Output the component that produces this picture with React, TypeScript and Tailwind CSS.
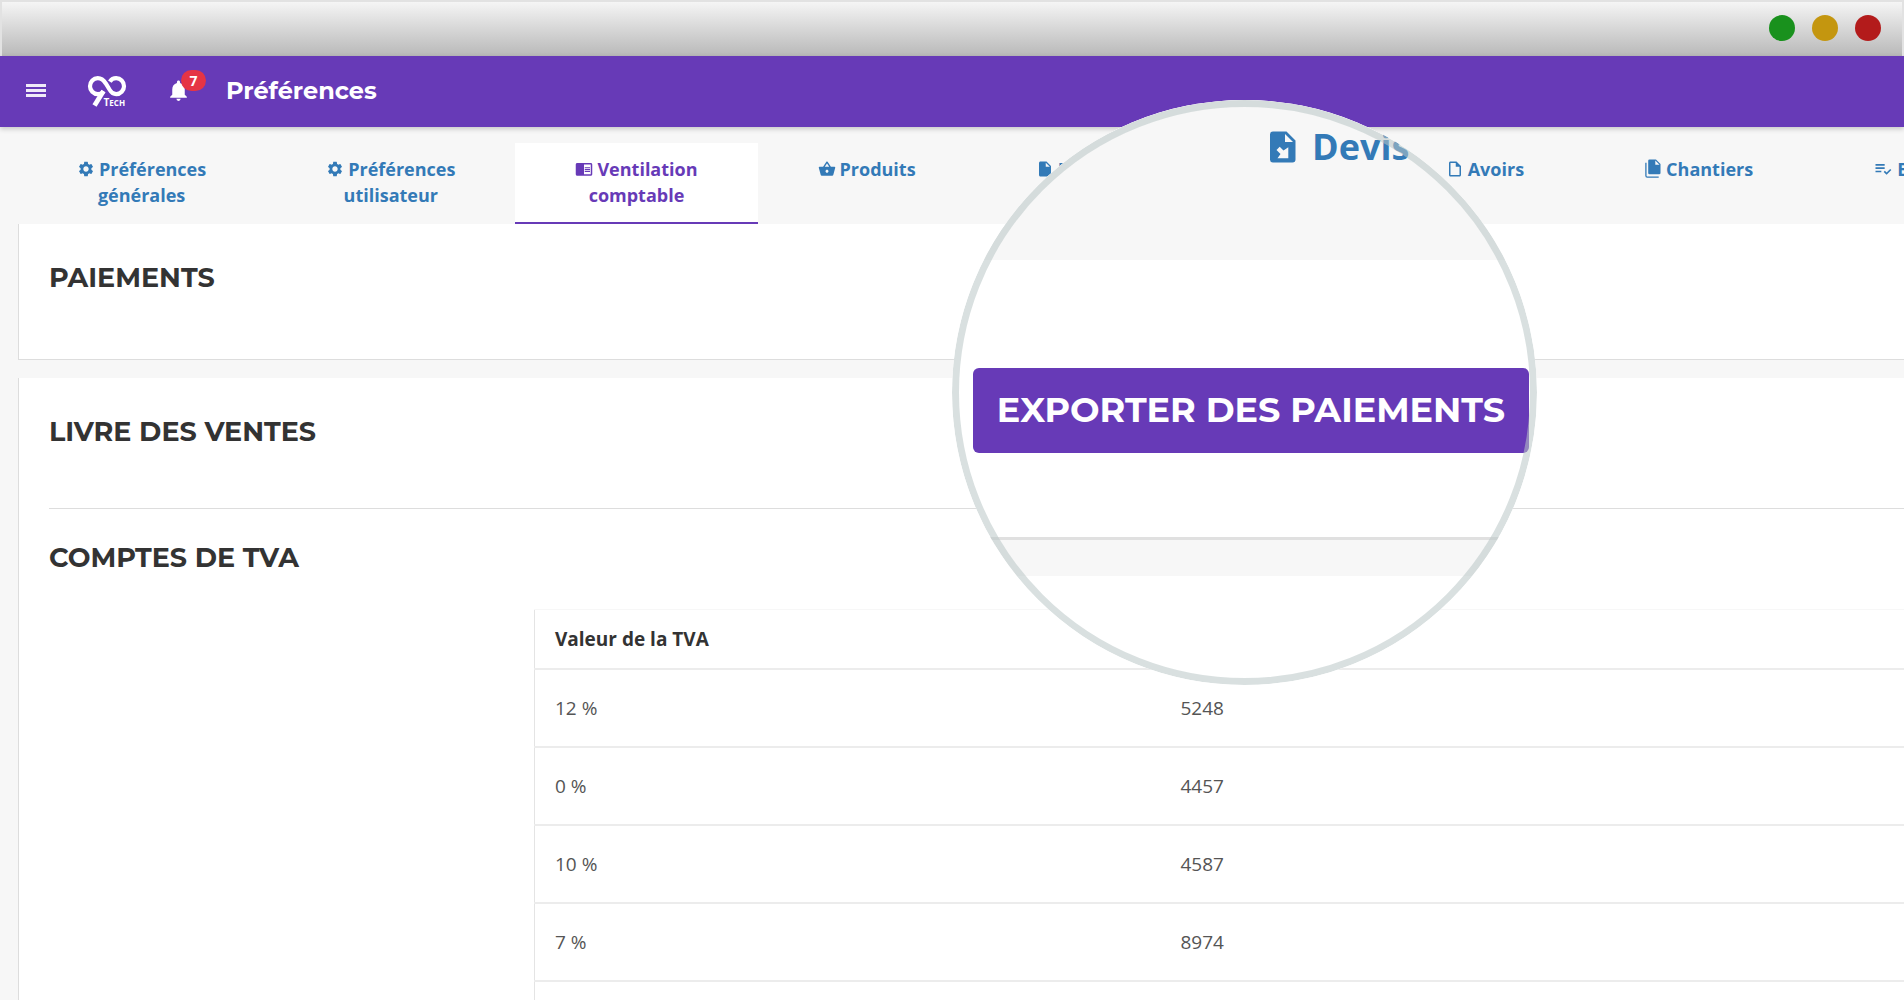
import {
  MdChromeReaderMode,
  MdInsertDriveFile,
  MdNotifications,
  MdOutlineInsertDriveFile,
  MdPlaylistAddCheck,
  MdSettings,
  MdShoppingBasket,
} from "react-icons/md";

/* -------------------------------------------------------
   ICONS
---------------------------------------------------------*/
function IconChantier() {
  return (
    <svg viewBox="0 0 18 20" className="h-5 w-[18px]" fill="currentColor">
      <path d="M5.500 0.500h6.500l4.500 4.500v9a1.300 1.300 0 0 1-1.300 1.300H5.500A1.300 1.300 0 0 1 4.200 14V1.800A1.300 1.300 0 0 1 5.500 0.500zM11.300 1.600v4.200h4.200z" fillRule="evenodd" />
      <path d="M1.900 3.800v13a1.300 1.300 0 0 0 1.300 1.300h11.500" fill="none" stroke="currentColor" strokeWidth="1.300" />
    </svg>
  );
}

function IconDevis({ className }: { className: string }) {
  return (
    <svg viewBox="0 0 26 32" className={className} fill="currentColor">
      <path
        fillRule="evenodd"
        d="M3 0.500h13.500l9 9V28.500a3 3 0 0 1-3 3H3a3 3 0 0 1-3-3V3.500a3 3 0 0 1 3-3zM15 3v8h8zM6.500 19l3.200-3.200 3.800 3.600 4.800-3.200V27.300H7.500l3-4.300z"
      />
    </svg>
  );
}

function Logo() {
  return (
    <svg viewBox="0 0 38 30" className="h-[30px] w-[38px] overflow-visible" fill="none" stroke="#fff">
      <path
        d="M15.500 15.500C14 17.500 12 18.200 9.800 18.200C5.500 18.200 2 14.500 2 10.200C2 5.500 5.500 2.200 9.800 2.200C13.500 2.200 15.500 4 17.800 7.500L21.800 14C23.400 16.700 25.300 18.200 28.200 18.200C32.500 18.200 36 14.500 36 10.200C36 5.500 32.500 2.200 28.200 2.200C25.500 2.200 23.300 3.400 21.800 5.600"
        strokeWidth="4.200"
      />
      <path d="M15.500 15L6.500 29.500" strokeWidth="4.800" />
      <text
        x="15.500"
        y="29.500"
        fill="#fff"
        stroke="none"
        fontSize="10"
        fontWeight="700"
        fontFamily="Open Sans, sans-serif"
      >
        T<tspan fontSize="8">ECH</tspan>
      </text>
    </svg>
  );
}

/* -------------------------------------------------------
   DATA
---------------------------------------------------------*/
const TABS = [
  { icon: <MdSettings size={18} />, lines: ["Préférences", "générales"] },
  { icon: <MdSettings size={18} />, lines: ["Préférences", "utilisateur"] },
  { icon: <MdChromeReaderMode size={18} />, lines: ["Ventilation", "comptable"], active: true },
  { icon: <MdShoppingBasket size={18} />, lines: ["Produits"] },
  { icon: <MdInsertDriveFile size={18} />, lines: ["Factures"] },
  { icon: <IconDevis className="h-4 w-[18px]" />, lines: ["Devis"] },
  { icon: <MdOutlineInsertDriveFile size={18} />, lines: ["Avoirs"] },
  { icon: <IconChantier />, lines: ["Chantiers"] },
  { icon: <MdPlaylistAddCheck size={20} />, lines: ["Bons"] },
];

const COMPTES = [
  { tva: "12 %", compte: "5248" },
  { tva: "0 %", compte: "4457" },
  { tva: "10 %", compte: "4587" },
  { tva: "7 %", compte: "8974" },
];

/* -------------------------------------------------------
   LAYOUT
---------------------------------------------------------*/
function TitleBar() {
  return (
    <div className="flex h-14 shrink-0 items-center justify-end gap-[17px] border-x-2 border-t-2 border-[#e2e2e2] bg-linear-to-b from-[#f5f5f5] to-[#b9b9b9] pr-[21px] pb-0.5">
      <span className="size-[26px] rounded-full bg-[#19911d]" />
      <span className="size-[26px] rounded-full bg-[#c4960f]" />
      <span className="size-[26px] rounded-full bg-[#b31b1b]" />
    </div>
  );
}

function Header() {
  return (
    <header className="relative flex h-[71px] shrink-0 items-center bg-[#673ab7] pb-0.5 pl-[26px] text-white shadow-[0_2px_5px_rgba(0,0,0,0.2)]">
      <button aria-label="Menu" className="flex w-5 flex-col gap-[2px]">
        <span className="h-[3px] bg-white/90" />
        <span className="h-[3px] bg-white/90" />
        <span className="h-[3px] bg-white/90" />
      </button>
      <a href="#" aria-label="90 Tech" className="ml-[42px]">
        <Logo />
      </a>
      <button aria-label="Notifications" className="relative ml-10">
        <MdNotifications size={25} />
        <span className="absolute -top-2 left-[15px] flex h-[21px] w-[25px] items-center justify-center rounded-full bg-[#e53445] text-sm font-bold">
          7
        </span>
      </button>
      <h1 className="ml-[35px] font-[Montserrat,Inter,sans-serif] text-2xl font-bold">Préférences</h1>
    </header>
  );
}

function Tabs() {
  return (
    <nav className="flex h-[97px] shrink-0 overflow-hidden pt-4 pl-[17px]">
      {TABS.map(({ icon, lines, active }) => (
        <a
          key={lines.join(" ")}
          href="#"
          className={`shrink-0 px-[60px] pt-[13px] text-center text-lg leading-[26px] font-bold whitespace-nowrap ${
            active ? "border-b-2 border-[#673ab7] bg-white text-[#673ab7]" : "text-[#337ab7]"
          }`}
        >
          <span className="flex h-[26px] items-center justify-center gap-1">
            {icon}
            {lines[0]}
          </span>
          {lines[1]}
        </a>
      ))}
    </nav>
  );
}

function Titre({ children }: { children: string }) {
  return (
    <h2 className="font-[Montserrat,Inter,sans-serif] text-[27px] leading-8 font-bold text-[#333]">
      {children}
    </h2>
  );
}

function TableTva() {
  return (
    <table className="w-full table-fixed border-t border-l border-t-[#f7f7f7] border-l-[#e4e4e4] text-left text-[19px] text-[#555]">
      <thead>
        <tr className="h-[59px] border-b-2 border-[#ececec] text-[#333]">
          <th className="w-[626px] px-5 font-bold">Valeur de la TVA</th>
          <th />
        </tr>
      </thead>
      <tbody>
        {COMPTES.map((c) => (
          <tr key={c.tva} className="h-[78px] border-b-2 border-[#ececec]">
            <td className="px-5 pt-0.5">{c.tva}</td>
            <td className="px-5 pt-0.5">{c.compte}</td>
          </tr>
        ))}
        <tr className="h-[78px]">
          <td />
          <td />
        </tr>
      </tbody>
    </table>
  );
}

/* magnified view laid over the page */
function Loupe() {
  return (
    <div className="absolute top-[100px] left-[952px] flex size-[585px] flex-col overflow-hidden rounded-full bg-white">
      <div className="flex h-40 shrink-0 bg-[#f7f7f7] pt-[21px] pl-[318px]">
        <span className="flex h-[52px] items-center gap-4 text-4xl font-bold text-[#337ab7]">
          <IconDevis className="h-8 w-[26px]" />
          Devis
        </span>
      </div>
      <div className="flex h-[280px] shrink-0 items-start border-b-[3px] border-[#e0e0e0] pt-[108px] pl-[21px]">
        <button className="h-[85px] w-[556px] shrink-0 rounded-md bg-[#673ab7] font-[Montserrat,Inter,sans-serif] text-[35px] font-bold whitespace-nowrap text-white">
          EXPORTER DES PAIEMENTS
        </button>
      </div>
      <div className="h-9 shrink-0 bg-[#f7f7f7]" />
      <div className="pointer-events-none absolute inset-0 rounded-full border-[7px] border-[rgba(186,199,199,0.55)]" />
    </div>
  );
}

export default function App() {
  return (
    <div className="relative flex h-screen flex-col overflow-hidden bg-[#f7f7f7] font-['Open_Sans',sans-serif]">
      <TitleBar />
      <Header />
      <Tabs />

      <main className="flex flex-1 flex-col gap-[18px] pl-[18px]">
        <section className="h-[136px] shrink-0 border-b border-l border-[#ddd] bg-white pt-[38px] pl-[30px]">
          <Titre>PAIEMENTS</Titre>
        </section>

        <section className="flex-1 border-l border-[#ddd] bg-white pt-[38px] pl-[30px]">
          <div className="border-b border-[#ddd] pb-[60px]">
            <Titre>LIVRE DES VENTES</Titre>
          </div>
          <div className="pt-[33px] pb-[35px]">
            <Titre>COMPTES DE TVA</Titre>
          </div>
          <div className="pl-[485px]">
            <TableTva />
          </div>
        </section>
      </main>

      <Loupe />
    </div>
  );
}
